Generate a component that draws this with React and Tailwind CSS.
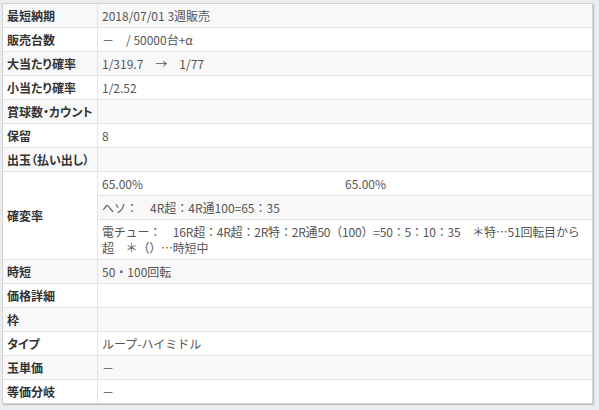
const rows = [
  { label: "最短納期", value: "2018/07/01 3週販売" },
  { label: "販売台数", value: "－　/ 50000台+α" },
  { label: "大当たり確率", value: "1/319.7　→　1/77" },
  { label: "小当たり確率", value: "1/2.52" },
  { label: "賞球数・カウント", value: "" },
  { label: "保留", value: "8" },
  { label: "出玉（払い出し）", value: "" },
  { label: "確変率", sub: true },
  { label: "時短", value: "50・100回転" },
  { label: "価格詳細", value: "" },
  { label: "枠", value: "" },
  { label: "タイプ", value: "ループ-ハイミドル" },
  { label: "玉単価", value: "－" },
  { label: "等価分岐", value: "－" },
]

function Label({ children }) {
  return (
    <div className="w-[95px] shrink-0 border-r border-[#e3e3e3] px-1 pt-[4px] pb-[3px] flex items-center font-bold text-[#333] [font-feature-settings:'palt'] whitespace-nowrap">
      {children}
    </div>
  )
}

export default function App() {
  return (
    <div
      className="min-h-[410px] w-[599px] bg-[#e9edf0] pt-[3px] pl-[2px]"
      style={{ fontFamily: '"Noto Sans CJK JP", "Noto Sans", sans-serif' }}
    >
      <div className="w-[591px] border border-[#d2d2d2] bg-white text-[12px] leading-[16px] shadow-[1px_1px_1px_rgba(0,0,0,0.18)]">
        {rows.map((row, i) => {
          if (row.sub) {
            return (
              <div key={i} className="flex border-b border-[#e3e3e3] bg-white">
                <Label>{row.label}</Label>
                <div className="flex-1 text-[#555]">
                  <div className="flex border-b border-[#e3e3e3] bg-white">
                    <div className="w-[243px] px-1 pt-[4px] pb-[3px]">65.00%</div>
                    <div className="px-1 pt-[4px] pb-[3px]">65.00%</div>
                  </div>
                  <div className="border-b border-[#e3e3e3] bg-[#f8f8f8] px-1 pt-[4px] pb-[3px]">
                    ヘソ：　4R超：4R通100=65：35
                  </div>
                  <div className="bg-white px-1 pt-[4px] pb-[3px] tracking-[-0.2px]">
                    電チュー：　16R超：4R超：2R特：2R通50（100）=50：5：10：35　＊特…51回転目から
                    <br />
                    超　＊（）…時短中
                  </div>
                </div>
              </div>
            )
          }
          const gray = i % 2 === 0
          return (
            <div
              key={i}
              className={
                (gray ? "bg-[#f8f8f8] " : "bg-white ") +
                (i === rows.length - 1 ? "flex" : "flex border-b border-[#e3e3e3]")
              }
            >
              <Label>{row.label}</Label>
              <div className="flex-1 px-1 pt-[4px] pb-[3px] text-[#555] min-h-[23px]">{row.value}</div>
            </div>
          )
        })}
      </div>
    </div>
  )
}
